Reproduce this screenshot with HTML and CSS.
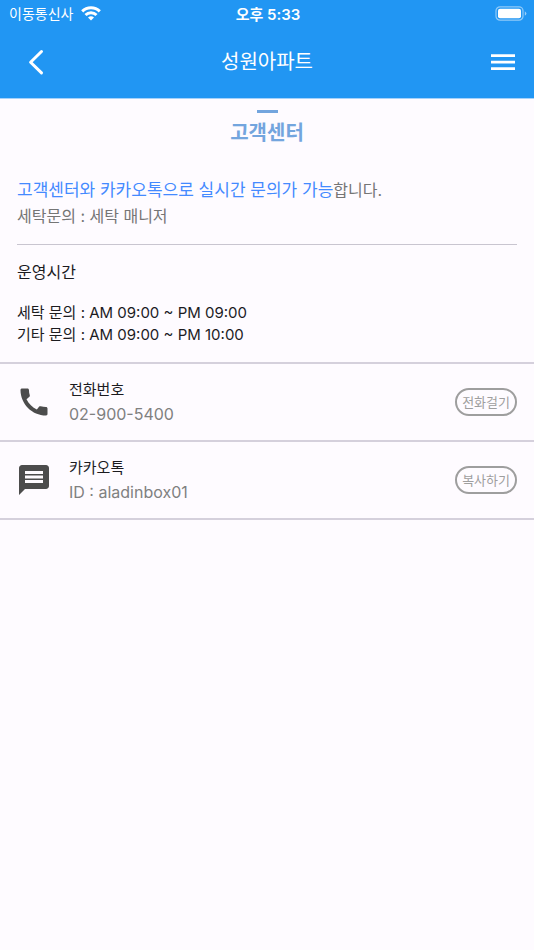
FILE: index.html
```html
<!DOCTYPE html>
<html lang="ko">
<head>
<meta charset="utf-8">
<meta name="viewport" content="width=device-width, initial-scale=1">
<title>고객센터</title>
<link rel="stylesheet" href="styles.css">
</head>
<body>
<header class="top">
  <div class="status">
    <div class="carrier">
      <span>이동통신사</span>
      <svg width="20" height="15" viewBox="0 0 20 15" fill="none" stroke="#fff" stroke-width="3" aria-hidden="true">
        <path d="M1.2 5.4a12.6 12.6 0 0 1 17.6 0"/>
        <path d="M4.5 9a7.9 7.9 0 0 1 11 0"/>
        <path d="M10 14.6 7 11.6a4.3 4.3 0 0 1 6 0z" fill="#fff" stroke="none"/>
      </svg>
    </div>
    <span class="clock">오후 5:33</span>
    <svg class="battery" width="32" height="15" viewBox="0 0 32 15" aria-hidden="true">
      <rect x="1" y=".8" width="27" height="13.4" rx="4" fill="none" stroke="#fff" stroke-opacity=".5" stroke-width="1.2"/>
      <rect x="3" y="2.8" width="23" height="9.4" rx="2" fill="#fff"/>
      <path d="M29.8 5.2q3.2 2.3 0 4.6z" fill="#fff" fill-opacity=".55"/>
    </svg>
  </div>
  <nav class="bar">
    <button class="icon-btn" type="button" aria-label="뒤로">
      <svg width="40" height="40" viewBox="0 0 40 40" fill="none" stroke="#fff" stroke-width="3" stroke-linecap="round" stroke-linejoin="round"><path d="M27.5 9.5 16.6 20.2l10.9 10.7"/></svg>
    </button>
    <h1 class="bar-title">성원아파트</h1>
    <button class="icon-btn" type="button" aria-label="메뉴">
      <svg width="40" height="40" viewBox="0 0 40 40" fill="#fff"><path d="M11 12.2h24v2.7H11zM11 18.8h24v2.7H11zM11 25.3h24V28H11z"/></svg>
    </button>
  </nav>
</header>
<main>
  <h2 class="page-title">고객센터</h2>
  <section class="intro">
    <p><span class="highlight">고객센터와 카카오톡으로 실시간 문의가 가능</span>합니다.</p>
    <p>세탁문의 : 세탁 매니저</p>
  </section>
  <section class="hours">
    <h3>운영시간</h3>
    <p>세탁 문의 : AM 09:00 ~ PM 09:00</p>
    <p>기타 문의 : AM 09:00 ~ PM 10:00</p>
  </section>
  <ul class="contacts">
    <li class="contact">
      <svg class="contact-icon" width="36" height="36" viewBox="0 0 24 24" aria-hidden="true"><path d="M20.01 15.38c-1.23 0-2.42-.2-3.53-.56-.35-.12-.74-.03-1.01.24l-1.57 1.97c-2.83-1.35-5.48-3.9-6.89-6.83l1.95-1.66c.27-.28.35-.67.24-1.02-.37-1.11-.56-2.3-.56-3.53 0-.54-.45-.99-.99-.99H4.19C3.65 3 3 3.24 3 3.99 3 13.28 10.73 21 20.01 21c.71 0 .99-.63.99-1.18v-3.45c0-.54-.45-.99-.99-.99z"/></svg>
      <div class="contact-text">
        <h3>전화번호</h3>
        <p>02-900-5400</p>
      </div>
      <button class="pill" type="button">전화걸기</button>
    </li>
    <li class="contact">
      <svg class="contact-icon" width="36" height="36" viewBox="0 0 24 24" aria-hidden="true"><path d="M20 2H4c-1.1 0-1.99.9-1.99 2L2 22l4-4h14c1.1 0 2-.9 2-2V4c0-1.1-.9-2-2-2zm-2 12H6v-2h12v2zm0-3H6V9h12v2zm0-3H6V6h12v2z"/></svg>
      <div class="contact-text">
        <h3>카카오톡</h3>
        <p>ID : aladinbox01</p>
      </div>
      <button class="pill" type="button">복사하기</button>
    </li>
  </ul>
</main>
</body>
</html>
```
FILE: styles.css
```css
* {
  box-sizing: border-box;
}

body {
  margin: 0;
  background: #fefbff;
  color: #1c1b1f;
  font-family: Inter, "Noto Sans CJK KR", sans-serif;
  font-size: 15px;
}

h1, h2, h3, p, ul {
  margin: 0;
  padding: 0;
  font-weight: 400;
}

button {
  padding: 0;
  background: none;
  border: 0;
  font-family: inherit;
}

svg {
  display: block;
}

.top {
  border-bottom: 1px solid #a5d2fb;
  background: #2196f3;
  color: #fff;
}

.status {
  display: grid;
  grid-template-columns: 1fr auto 1fr;
  align-items: center;
  height: 26px;
  padding: 0 7px 0 9px;
  font-size: 14px;
}

.carrier {
  display: flex;
  align-items: center;
  gap: 8px;
}

.clock {
  font-size: 15px;
  font-weight: 600;
}

.battery {
  justify-self: end;
}

.bar {
  display: flex;
  align-items: center;
  justify-content: space-between;
  height: 72px;
  padding: 0 14px;
}

.bar-title {
  font-size: 20px;
  line-height: 24px;
}

.page-title {
  padding-top: 11px;
  color: #73a5de;
  font-size: 20px;
  font-weight: 600;
  line-height: 40px;
  text-align: center;
}

.page-title::before {
  content: "";
  display: block;
  width: 21px;
  height: 3px;
  margin: 0 auto;
  background: #73a5de;
}

.intro {
  margin: 0 17px;
  padding: 24px 0 15px;
  border-bottom: 1px solid #c9c5d0;
  color: #757575;
  font-size: 16px;
  font-weight: 300;
  line-height: 26px;
}

.highlight {
  color: #448aff;
  font-size: 17px;
}

.hours {
  padding: 14px 17px 16px;
  line-height: 22px;
}

.hours h3 {
  margin-bottom: 17px;
  font-size: 16px;
  line-height: 26px;
}

.contacts {
  border-top: 2px solid #d5d0dc;
  list-style: none;
}

.contact {
  display: flex;
  align-items: center;
  height: 78px;
  padding: 0 17px 0 16px;
  border-bottom: 2px solid #d5d0dc;
}

.contact-icon {
  fill: #4c4c4c;
}

.contact-text {
  flex: 1;
  padding-left: 17px;
  line-height: 24px;
}

.contact-text h3 {
  font-size: 15px;
}

.contact-text p {
  color: #808080;
  font-size: 16px;
}

.pill {
  padding: 0 5px;
  border: 2px solid #9e9e9e;
  border-radius: 14px;
  color: #9e9e9e;
  font-size: 13px;
  line-height: 24px;
}
```
